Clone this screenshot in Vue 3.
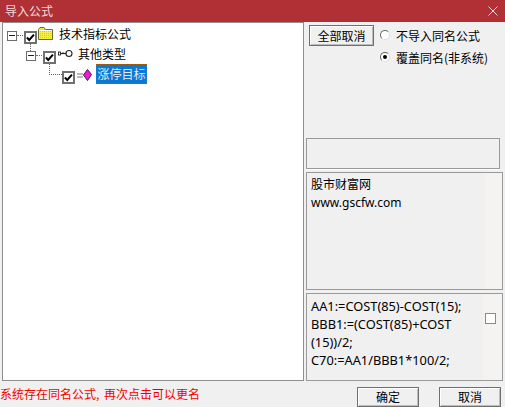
<script setup>
const rows = [
  { id: 1, cls: 'row1', label: '技术指标公式', toggle: true, icon: 'folder' },
  { id: 2, cls: 'row2', label: '其他类型', toggle: true, icon: 'key' },
  { id: 3, cls: 'row3', label: '涨停目标', toggle: false, icon: 'gem', selected: true },
]
</script>

<template>
  <div class="win">
    <header class="title">
      <span>导入公式</span>
      <svg class="close" width="10" height="10" viewBox="0 0 10 10"><path d="M0.5 0.5L9.5 9.5M9.5 0.5L0.5 9.5" stroke="#f0d8d8" fill="none"/></svg>
    </header>
    <div class="main">
      <section class="tree">
        <div v-for="r in rows" :key="r.id" class="row" :class="r.cls">
          <span v-if="r.toggle" class="tog"><i></i></span>
          <span v-if="r.toggle" class="dots"></span>
          <span v-else class="elbow"></span>
          <span class="chk">
            <svg width="10" height="9" viewBox="0 0 10 9"><path d="M1 4.5L3.6 7.2L8.8 1.2" stroke="#000" stroke-width="2.2" fill="none"/></svg>
          </span>
          <svg v-if="r.icon === 'folder'" class="ic" width="15" height="13" viewBox="0 0 15 13">
            <defs>
              <pattern id="dither" width="2" height="2" patternUnits="userSpaceOnUse">
                <rect width="2" height="2" fill="#f8f040"/>
                <rect width="1" height="1" fill="#d8c830"/>
              </pattern>
            </defs>
            <path d="M0.5 12.5V2.5L2 .5H6L7.5 2.5H14.5V12.5Z" fill="url(#dither)" stroke="#6b6b2c"/>
            <path d="M1.5 3.5H13.5" stroke="#fff"/>
          </svg>
          <svg v-else-if="r.icon === 'key'" class="ic" width="15" height="9" viewBox="0 0 15 9">
            <circle cx="11" cy="4.5" r="3" fill="#fff" stroke="#222" stroke-width="1.1"/>
            <path d="M8 4.5H1.5" stroke="#222" stroke-width="1.2" fill="none"/>
            <rect x="0.5" y="3" width="2" height="3" fill="#fff" stroke="#222" stroke-width="0.9"/>
            <path d="M5 4V3" stroke="#555"/>
          </svg>
          <svg v-else class="ic" width="15" height="12" viewBox="0 0 15 12">
            <path d="M0 5H6M0 8H6" stroke="#777"/>
            <path d="M6.5 6L10.5 .5L14.5 5.5L10.5 11.5Z" fill="#f018d8" stroke="#401850"/>
          </svg>
          <span class="lbl" :class="{ sel: r.selected }">{{ r.label }}</span>
        </div>
      </section>
      <aside class="side">
        <div class="opts">
          <button class="btn all">全部取消</button>
          <div class="radios">
            <label class="radio"><span class="dot"></span>不导入同名公式</label>
            <label class="radio"><span class="dot on"></span>覆盖同名(非系统)</label>
          </div>
        </div>
        <div class="box empty"></div>
        <div class="box info">股市财富网<br>www.gscfw.com</div>
        <div class="box code">
          <p>AA1:=COST(85)-COST(15);<br>BBB1:=(COST(85)+COST<br>(15))/2;<br>C70:=AA1/BBB1*100/2;</p>
          <span class="mini"></span>
        </div>
      </aside>
    </div>
    <footer class="foot">
      <span class="msg">系统存在同名公式, 再次点击可以更名</span>
      <button class="btn ok">确定</button>
      <button class="btn cancel">取消</button>
    </footer>
  </div>
</template>

<style>
html, body { margin: 0; background: #f0f0f0; }
</style>

<style scoped>
.win {
  width: 505px;
  height: 407px;
  background: #f0f0f0;
  font: 12px "Noto Sans CJK SC", "Liberation Sans", sans-serif;
  color: #000;
  overflow: hidden;
  display: flex;
  flex-direction: column;
}
.title {
  height: 22px;
  flex: none;
  background: #b03035;
  color: #f4dcdc;
  display: flex;
  align-items: center;
  justify-content: space-between;
  padding: 0 6px 1px 5px;
  box-sizing: border-box;
}
.close { margin-right: 1px; }
.main {
  height: 359px;
  flex: none;
  display: flex;
  padding-left: 2px;
}
.tree {
  width: 302px;
  flex: none;
  height: 359px;
  box-sizing: border-box;
  background: #fff;
  border: 1px solid #8e8e8e;
  padding-top: 2px;
}
.row {
  height: 20px;
  display: flex;
  align-items: center;
  position: relative;
}
.row1 { padding-left: 4px; }
.row2 { padding-left: 23px; }
.row3 { padding-left: 46px; }
.row2::before {
  content: "";
  position: absolute;
  left: 27px;
  top: -2px;
  height: 8px;
  border-left: 1px dotted #666;
}
.tog {
  width: 10px;
  height: 10px;
  box-sizing: border-box;
  border: 1px solid #6d6d6d;
  background: #fff;
  display: flex;
  align-items: center;
  justify-content: center;
  flex: none;
  margin-top: 1px;
}
.tog i { display: block; width: 6px; height: 1px; background: #222; }
.dots {
  width: 8px;
  margin-right: -1px;
  border-top: 1px dotted #666;
  flex: none;
}
.elbow {
  width: 13px;
  height: 11px;
  align-self: flex-start;
  margin-top: -1px;
  box-sizing: border-box;
  border-left: 1px dotted #666;
  border-bottom: 1px dotted #666;
  flex: none;
}
.chk {
  width: 13px;
  height: 13px;
  box-sizing: border-box;
  border: 2px solid #707070;
  background: #fff;
  display: flex;
  align-items: center;
  justify-content: center;
  flex: none;
  margin-top: 4px;
}
.ic { flex: none; margin-left: 1px; }
.row1 .ic { margin-top: -3px; }
.row2 .ic { margin-left: 2px; margin-top: -3px; }
.row3 .ic { margin-left: 2px; margin-top: 0; }
.lbl {
  margin-left: 6px;
  line-height: 18px;
  white-space: nowrap;
  margin-top: -2px;
}
.row2 .lbl { margin-left: 5px; }
.row3 .lbl.sel {
  margin-left: 4px;
  margin-top: -3px;
  background: #0b78d6;
  color: #e8e8e8;
  outline: 1px dotted #a06010;
  outline-offset: -1px;
  padding: 0 1.5px;
  line-height: 20px;
}
.side {
  width: 199px;
  flex: none;
  padding-left: 2px;
  padding-top: 3px;
  box-sizing: border-box;
  display: flex;
  flex-direction: column;
}
.opts {
  height: 113px;
  flex: none;
  display: flex;
  padding-left: 2px;
}
.btn {
  font: 12px "Noto Sans CJK SC", "Liberation Sans", sans-serif;
  color: #000;
  background: #f0f0f0;
  border: 1px solid #6f6f6f;
  box-shadow: inset 1px 1px 0 #fff, inset -1px -1px 0 #bcbcbc;
  padding: 0;
  box-sizing: border-box;
}
.all { width: 65px; height: 21px; margin-left: 1px; }
.radios {
  margin-left: 6px;
  display: flex;
  flex-direction: column;
  gap: 2px;
}
.radio {
  display: flex;
  align-items: center;
  gap: 6px;
  height: 20px;
  white-space: nowrap;
}
.dot {
  width: 10px;
  height: 10px;
  box-sizing: border-box;
  border-radius: 50%;
  background: #fff;
  border: 1px solid;
  border-color: #666 #ddd #ddd #666;
  display: flex;
  align-items: center;
  justify-content: center;
}
.dot.on::after {
  content: "";
  width: 4px;
  height: 4px;
  border-radius: 50%;
  background: #000;
}
.box {
  border: 1px solid #9a9a9a;
  box-sizing: border-box;
  flex: none;
}
.empty {
  width: 194px;
  height: 31px;
  box-shadow: 0 1px 0 #fff;
}
.info {
  width: 197px;
  height: 118px;
  margin-top: 3px;
  padding: 3px 4px;
  line-height: 18px;
  font-family: "Noto Sans", "Noto Sans CJK SC", sans-serif;
  background: linear-gradient(90deg, #f0f0f0 178px, #f4f3f1 178px);
}
.code {
  width: 197px;
  height: 88px;
  margin-top: 3px;
  padding: 3px 4px;
  line-height: 18px;
  font-family: "Noto Sans", sans-serif;
  font-size: 12.8px;
  display: flex;
  background: linear-gradient(90deg, #f0f0f0 176px, #f4f3f1 176px);
  position: relative;
}
.code p { margin: 0; white-space: nowrap; }
.mini {
  position: absolute;
  right: 6px;
  top: 19px;
  width: 11px;
  height: 11px;
  box-sizing: border-box;
  border: 1px solid #8a8a8a;
  background: #fff;
}
.foot {
  flex: 1;
  display: flex;
  align-items: center;
  padding-top: 5px;
  box-sizing: border-box;
}
.msg {
  color: #f00000;
  white-space: nowrap;
  width: 357px;
  flex: none;
  word-spacing: 2px;
  margin-top: -7px;
}
.ok { width: 62px; height: 20px; }
.cancel { width: 62px; height: 20px; margin-left: 20px; }
</style>
